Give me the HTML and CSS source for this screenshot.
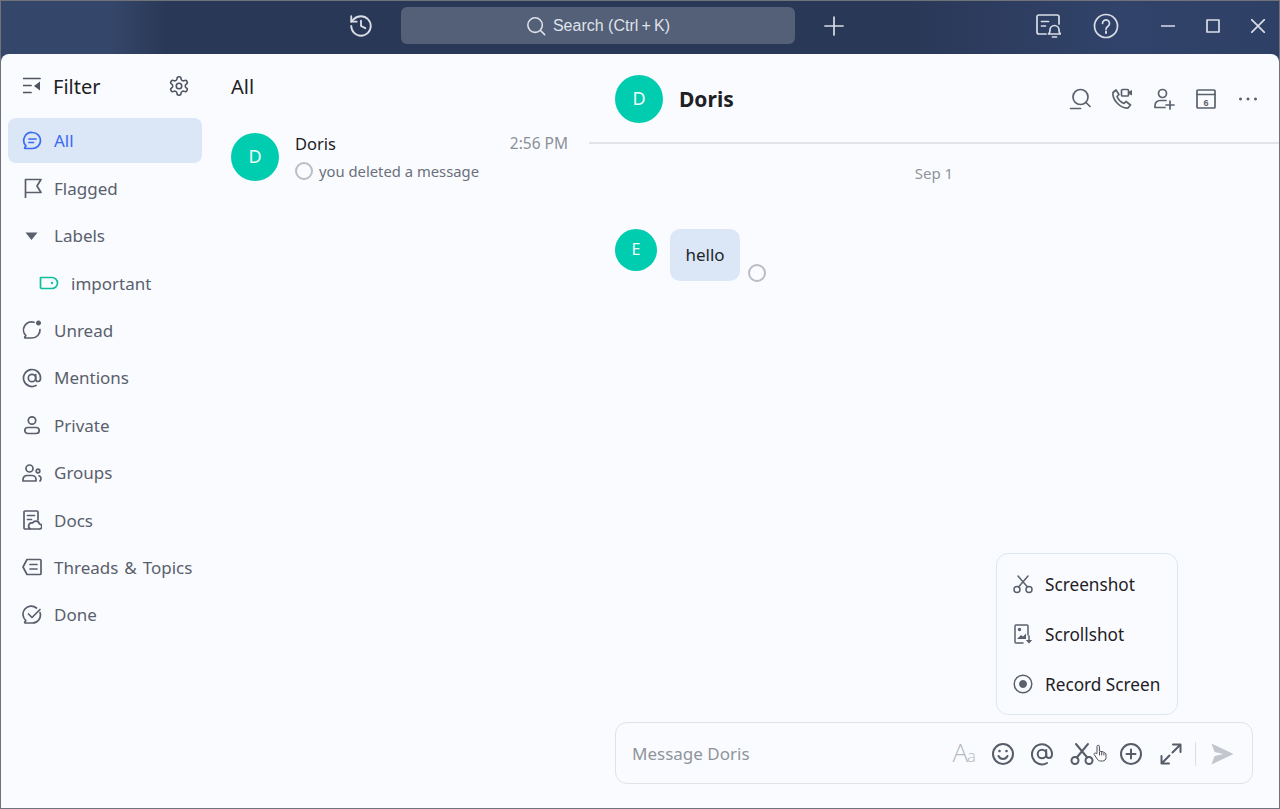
FILE: index.html
```html
<!DOCTYPE html>
<html lang="en">
<head>
    <meta charset="UTF-8">
    <meta name="viewport" content="width=device-width, initial-scale=1.0">
    <title>Doris</title>
    <link rel="stylesheet" href="styles.css">
</head>
<body>
<div class="app">
    <header class="titlebar">
        <svg class="tb-history" width="26" height="26" viewBox="0 0 24 24"><path d="M3 12a9 9 0 1 0 9-9 9.75 9.75 0 0 0-6.74 2.74L3 8"/><path d="M3 3v5h5"/><path d="M12 7v5l4 2"/></svg>
        <div class="search">
            <svg width="22" height="22" viewBox="0 0 22 22"><circle cx="10" cy="10" r="8"/><path d="M16 16l4.5 4.5"/></svg>
            <span>Search (Ctrl&#8201;+&#8201;K)</span>
        </div>
        <svg class="tb-plus" width="20" height="20" viewBox="0 0 20 20"><path d="M10 1v18M1 10h18"/></svg>
        <svg class="tb-bell" width="26" height="26" viewBox="0 0 26 26"><path d="M11 21H4a2 2 0 0 1-2-2V4a2 2 0 0 1 2-2h18a2 2 0 0 1 2 2v7"/><path d="M6.500 8.500h7M6.500 13h4"/><path d="M13.500 21c1.500-1 1.500-2.500 1.500-4a4.500 4.500 0 0 1 9 0c0 1.500 0 3 1.500 4z"/><path d="M17.500 24h4"/></svg>
        <svg class="tb-help" width="26" height="26" viewBox="0 0 26 26"><circle cx="13" cy="13" r="11.500"/><path d="M9.500 10.500a3.500 3.500 0 1 1 5.500 2.800c-1.300.9-2 1.500-2 3"/><path class="dot" d="M13 18.500v1.500"/></svg>
        <svg class="tb-min" width="14" height="14" viewBox="0 0 14 14"><path d="M0 7h14"/></svg>
        <svg class="tb-max" width="14" height="14" viewBox="0 0 14 14"><rect x="1" y="1" width="12" height="12"/></svg>
        <svg class="tb-close" width="14" height="14" viewBox="0 0 14 14"><path d="M0 0l14 14M14 0L0 14"/></svg>
    </header>

    <main class="main">
        <aside class="sidebar">
            <div class="side-head">
                <svg width="18" height="18" viewBox="0 0 18 18"><path d="M0 1.500h17M0 8.500h8M0 15.500h8"/><path class="solid" d="M17 4.500v9l-6-4.500z"/></svg>
                <span class="side-title">Filter</span>
                <svg class="gear" width="22" height="22" viewBox="0 0 24 24"><path d="M12.220 2h-.44a2 2 0 0 0-2 2v.18a2 2 0 0 1-1 1.730l-.43.25a2 2 0 0 1-2 0l-.15-.08a2 2 0 0 0-2.730.73l-.22.38a2 2 0 0 0 .73 2.730l.15.1a2 2 0 0 1 1 1.720v.51a2 2 0 0 1-1 1.740l-.15.09a2 2 0 0 0-.73 2.730l.22.38a2 2 0 0 0 2.730.73l.15-.08a2 2 0 0 1 2 0l.43.25a2 2 0 0 1 1 1.730V20a2 2 0 0 0 2 2h.44a2 2 0 0 0 2-2v-.18a2 2 0 0 1 1-1.730l.43-.25a2 2 0 0 1 2 0l.15.08a2 2 0 0 0 2.730-.73l.22-.39a2 2 0 0 0-.73-2.730l-.15-.08a2 2 0 0 1-1-1.740v-.5a2 2 0 0 1 1-1.740l.15-.09a2 2 0 0 0 .73-2.730l-.22-.38a2 2 0 0 0-2.730-.73l-.15.08a2 2 0 0 1-2 0l-.43-.25a2 2 0 0 1-1-1.730V4a2 2 0 0 0-2-2z"/><circle cx="12" cy="12" r="3"/></svg>
            </div>
            <nav class="nav">
                <div class="nav-item active">
                    <svg width="20" height="20" viewBox="0 0 20 20"><path d="M10.500 1.500a8 8 0 1 1 0 16H3.500c-.8 0-1-.6-.6-1.100l1.100-1.400a8 8 0 0 1 6.500-13.500z"/><path d="M7 8h7M7 11.500h4.500"/></svg>
                    <span>All</span>
                </div>
                <div class="nav-item">
                    <svg width="20" height="20" viewBox="0 0 20 20"><path d="M3.500 20V1.500h15.500l-4 6.500 4 6.500H3.500"/></svg>
                    <span>Flagged</span>
                </div>
                <div class="nav-item">
                    <svg width="20" height="20" viewBox="0 0 20 20"><path class="solid" d="M3.500 6.500h12l-6 7.500z"/></svg>
                    <span>Labels</span>
                </div>
                <div class="nav-item sub">
                    <svg class="teal" width="20" height="20" viewBox="0 0 20 20"><path d="M1.500 4.500h11.500a5.500 5.500 0 0 1 0 11H3a1.500 1.500 0 0 1-1.500-1.500z"/><path class="solid" d="M13 8.800a1.200 1.200 0 1 0 .01 0z"/></svg>
                    <span>important</span>
                </div>
                <div class="nav-item">
                    <svg width="20" height="20" viewBox="0 0 20 20"><path d="M18 9.500a8 8 0 0 1-8 8.500H3.500c-.8 0-1-.6-.6-1.100l1-1.300A8 8 0 0 1 12 2.300"/><path class="solid" d="M16.500 0.500a2.500 2.500 0 1 0 .01 0z"/></svg>
                    <span>Unread</span>
                </div>
                <div class="nav-item">
                    <svg width="20" height="20" viewBox="0 0 20 20"><path d="M14 17.500a8.500 8.500 0 1 1 4.500-7.500c0 2-1 3.500-2.500 3.500s-2.300-1-2.300-2.500V6.500"/><circle cx="10" cy="10" r="3.700"/></svg>
                    <span>Mentions</span>
                </div>
                <div class="nav-item">
                    <svg width="20" height="20" viewBox="0 0 20 20"><circle cx="10" cy="5.500" r="3.700"/><rect x="2.800" y="12.500" width="14.400" height="6" rx="3"/></svg>
                    <span>Private</span>
                </div>
                <div class="nav-item">
                    <svg width="20" height="20" viewBox="0 0 20 20"><circle cx="7.500" cy="5.500" r="3.500"/><path d="M1 18v-1.500a4 4 0 0 1 4-4h5a4 4 0 0 1 4 4V18z"/><circle cx="16" cy="8" r="1.800"/><path d="M17 12.800a3 3 0 0 1 2 2.700c0 1-.4 2-1 2.500"/></svg>
                    <span>Groups</span>
                </div>
                <div class="nav-item">
                    <svg width="20" height="20" viewBox="0 0 20 20"><path d="M8 19H3a1 1 0 0 1-1-1V2a1 1 0 0 1 1-1h12a1 1 0 0 1 1 1v8"/><path d="M5.500 5.500h7M5.500 9.500h4"/><path d="M9 19h8a2.500 2.500 0 0 0 .5-5 3.800 3.800 0 0 0-7-1 3 3 0 0 0-1.500 6z"/></svg>
                    <span>Docs</span>
                </div>
                <div class="nav-item">
                    <svg width="20" height="20" viewBox="0 0 20 20"><path d="M5 2.500h13a1 1 0 0 1 1 1v13a1 1 0 0 1-1 1H5L1 10z"/><path d="M8 7.500h7M8 12h7"/></svg>
                    <span>Threads &amp; Topics</span>
                </div>
                <div class="nav-item">
                    <svg width="20" height="20" viewBox="0 0 20 20"><path d="M18 7.500a8 8 0 0 1-7.500 10.500H3.500c-.8 0-1-.6-.6-1.100l1-1.300A8 8 0 0 1 14.500 3"/><path d="M6.500 9l3.500 3.500 8-8"/></svg>
                    <span>Done</span>
                </div>
            </nav>
        </aside>

        <section class="list">
            <h2 class="list-title">All</h2>
            <div class="conv">
                <div class="avatar large">D</div>
                <div class="conv-body">
                    <div class="conv-top">
                        <span class="conv-name">Doris</span>
                        <span class="conv-time">2:56 PM</span>
                    </div>
                    <div class="conv-sub">
                        <span class="read-mark"></span>
                        <span>you deleted a message</span>
                    </div>
                </div>
            </div>
        </section>

        <section class="chat">
            <div class="chat-head">
                <div class="avatar large">D</div>
                <span class="chat-name">Doris</span>
                <div class="chat-actions">
                    <svg width="22" height="22" viewBox="0 0 22 22"><circle cx="11.500" cy="9" r="7.500"/><path d="M17 14.500l4 4M1.500 20.500h10"/></svg>
                    <svg width="22" height="22" viewBox="0 0 22 22"><path d="M2 4.500l3-2.500 3 4.500-2 2c1 2.500 3.500 5.500 7 7l2-2 4.500 3.500-2.500 3C9.500 20.500 1 12 2 4.500z"/><rect x="10.500" y="1.500" width="7" height="6.500" rx="1"/><path class="solid" d="M18 3.500l3-1.500v5.500l-3-1.500z"/></svg>
                    <svg width="22" height="22" viewBox="0 0 22 22"><circle cx="9.500" cy="5.500" r="4"/><path d="M13 12.500H7a5 5 0 0 0-5 5v2h10M17 13v8M13 17h8"/></svg>
                    <svg width="22" height="22" viewBox="0 0 22 22"><rect x="2" y="2" width="18" height="18" rx="1"/><path d="M2 6.500h18"/><text class="cal-day" x="11" y="17.500">6</text></svg>
                    <svg width="22" height="22" viewBox="0 0 22 22"><path class="solid" d="M3.500 9.500a1.500 1.500 0 1 0 .01 0zM11 9.500a1.500 1.500 0 1 0 .01 0zM18.500 9.500a1.500 1.500 0 1 0 .01 0z"/></svg>
                </div>
            </div>
            <div class="messages">
                <div class="date">Sep 1</div>
                <div class="msg">
                    <div class="avatar small">E</div>
                    <div class="bubble">hello</div>
                    <span class="read-mark"></span>
                </div>
            </div>
            <div class="composer">
                <span class="placeholder">Message Doris</span>
                <div class="tools">
                    <span class="font-btn">A<small>a</small></span>
                    <svg width="24" height="24" viewBox="0 0 24 24"><circle cx="12" cy="12" r="10"/><path d="M7.500 14c1 2 2.700 3 4.500 3s3.500-1 4.500-3"/><path class="solid" d="M8.500 7.700a1.300 1.300 0 1 0 .01 0zM15.500 7.700a1.300 1.300 0 1 0 .01 0z"/></svg>
                    <svg class="at-btn" width="24" height="24" viewBox="0 0 24 24"><path d="M17 21a10 10 0 1 1 5-9c0 2.500-1.200 4-3 4s-2.800-1.200-2.800-3V8"/><circle cx="12" cy="12" r="4.300"/></svg>
                    <svg class="scissors" width="24" height="24" viewBox="0 0 24 24"><circle cx="5" cy="18.500" r="3.500"/><circle cx="19" cy="18.500" r="3.500"/><path d="M6.800 15.500L18 2M17.200 15.500L6 2"/></svg>
                    <svg class="plus-btn" width="24" height="24" viewBox="0 0 24 24"><circle cx="12" cy="12" r="10"/><path d="M12 7.500v9M7.500 12h9"/></svg>
                    <svg width="24" height="24" viewBox="0 0 24 24"><path d="M14 2.500h7.500V10M21 3l-7.500 7.500M10 21.500H2.500V14M3 21l7.500-7.500"/></svg>
                    <span class="tool-sep"></span>
                    <svg class="send" width="24" height="24" viewBox="0 0 24 24"><path class="solid" d="M1.500 1.500L23.500 12 1.500 22.500l3-8.500 9-2-9-2z"/></svg>
                </div>
            </div>

            <div class="shot-menu">
                <div class="shot-item">
                    <svg width="20" height="20" viewBox="0 0 20 20"><circle cx="4" cy="15.500" r="3"/><circle cx="16" cy="15.500" r="3"/><path d="M5.500 13L15 2M14.500 13L5 2"/></svg>
                    <span>Screenshot</span>
                </div>
                <div class="shot-item">
                    <svg width="20" height="20" viewBox="0 0 20 20"><path d="M10 19H3a1 1 0 0 1-1-1V2a1 1 0 0 1 1-1h11a1 1 0 0 1 1 1v9"/><circle cx="6.500" cy="5.500" r="1"/><path class="solid" d="M4 15l4-4 2 1.500 3-3V15z"/><path d="M16 12v6"/><path class="solid" d="M12.800 16h6.400L16 19.500z"/></svg>
                    <span>Scrollshot</span>
                </div>
                <div class="shot-item">
                    <svg width="20" height="20" viewBox="0 0 20 20"><circle cx="10" cy="10" r="8.800"/><path class="solid" d="M10 6a4 4 0 1 0 .01 0z"/></svg>
                    <span>Record Screen</span>
                </div>
            </div>

            <svg class="hand" width="14" height="18" viewBox="0 0 14 18"><path d="M4 9V2.500a1.200 1.200 0 0 1 2.400 0V7l4 1c1.500.5 2.600 1.200 2.600 3v2.500c0 2-1.500 3.500-3.500 3.500H7.500c-1.500 0-2.500-.7-3.300-2L1.200 10.500c-.6-1 .8-2.200 1.800-1.200z"/><path d="M6.500 8v3M8.700 8.500V11M10.900 9v2"/></svg>
        </section>
    </main>
</div>
</body>
</html>
```

FILE: styles.css
```css
* {
    box-sizing: border-box;
}
body, html {
    margin: 0;
    padding: 0;
    height: 100%;
    overflow: hidden;
    font-family: "Noto Sans", "Open Sans", sans-serif;
}
svg {
    display: block;
    flex: none;
    fill: none;
    stroke: currentColor;
    stroke-width: 1.700;
    stroke-linecap: round;
    stroke-linejoin: round;
}
svg .solid {
    fill: currentColor;
    stroke: none;
}
.app {
    display: flex;
    flex-direction: column;
    height: 809px;
    border: 1px solid #6f7278;
    background: linear-gradient(90deg, #34466a 0, #34466a 110px, #2a3857 165px, #2a3857 900px, #31436a 1120px, #2f4066 1280px);
}

/* title bar */
.titlebar {
    display: flex;
    align-items: center;
    height: 53px;
    flex: none;
    padding-bottom: 4px;
    color: #d9dde6;
}
.tb-history {
    margin-left: 347px;
}
.search {
    display: flex;
    align-items: center;
    justify-content: center;
    gap: 7px;
    width: 394px;
    height: 37px;
    margin-left: 27px;
    border-radius: 6px;
    background-color: #545f78;
    font-family: "Liberation Sans", Arial, sans-serif;
    font-size: 16px;
    color: #dfe3ea;
}
.search svg {
    width: 20px;
    height: 20px;
}
.tb-plus {
    margin-left: 29px;
}
.tb-bell {
    margin-left: 191px;
}
.tb-help {
    margin-left: 32px;
}
.tb-min {
    margin-left: 42px;
}
.tb-max {
    margin-left: 31px;
}
.tb-close {
    margin-left: 31px;
}
.tb-help .dot {
    stroke-width: 2;
}

/* main panel */
.main {
    display: flex;
    flex: 1;
    min-height: 0;
    background-color: #fafbfe;
    border-radius: 8px 8px 0 0;
}

/* left filter column */
.sidebar {
    width: 208px;
    flex: none;
    padding: 0 7px;
}
.side-head {
    display: flex;
    align-items: center;
    height: 64px;
    padding: 0 12px 0 15px;
    color: #4d5460;
}
.side-title {
    margin-left: 12px;
    font-size: 20px;
    color: #1d2024;
}
.gear {
    margin-left: auto;
}
.nav {
    display: flex;
    flex-direction: column;
    gap: 2px;
}
.nav-item {
    display: flex;
    align-items: center;
    gap: 12px;
    height: 45.400px;
    padding-left: 14px;
    padding-top: 0.400px;
    border-radius: 8px;
    font-size: 17px;
    word-spacing: 1.500px;
    color: #595f6c;
}
.nav-item.sub {
    padding-left: 31px;
}
.nav-item.active {
    background-color: #dbe6f7;
    color: #3a6bf4;
}
.teal {
    color: #0cbf9f;
}

/* conversation list */
.list {
    width: 380px;
    flex: none;
    padding-left: 22px;
    padding-right: 21px;
}
.list-title {
    margin: 0;
    height: 64px;
    line-height: 66px;
    font-size: 20px;
    font-weight: 400;
    color: #1d2024;
}
.conv {
    display: flex;
    gap: 16px;
    margin-top: 15px;
}
.conv-body {
    flex: 1;
}
.conv-top {
    display: flex;
    justify-content: space-between;
    height: 27px;
    line-height: 21px;
}
.conv-name {
    font-size: 16.500px;
    color: #1d2024;
}
.conv-time {
    font-size: 15.500px;
    color: #8b9097;
}
.conv-sub {
    display: flex;
    align-items: center;
    gap: 6px;
    font-size: 14.800px;
    line-height: 22px;
    color: #6a707b;
}
.read-mark {
    width: 18px;
    height: 18px;
    flex: none;
    border: 2px solid #b9bcc4;
    border-radius: 50%;
}
.avatar {
    display: flex;
    align-items: center;
    justify-content: center;
    flex: none;
    padding-bottom: 2px;
    border-radius: 50%;
    background-color: #00ccaf;
    color: #eefcf9;
}
.avatar.large {
    width: 48px;
    height: 48px;
    font-size: 18px;
}
.avatar.small {
    width: 42px;
    height: 42px;
    font-size: 16px;
}

/* chat pane */
.chat {
    position: relative;
    display: flex;
    flex-direction: column;
    flex: 1;
    min-width: 0;
}
.chat-head {
    display: flex;
    align-items: center;
    height: 90px;
    flex: none;
    padding: 2px 20px 0 26px;
    border-bottom: 2px solid #e1e3e8;
}
.chat-name {
    margin-left: 16px;
    font-size: 21px;
    font-weight: 700;
    color: #1d2024;
}
.chat-actions {
    display: flex;
    gap: 20px;
    margin-left: auto;
    color: #5a616c;
}
.cal-day {
    font-family: "Liberation Sans", sans-serif;
    font-size: 9px;
    font-weight: 700;
    fill: currentColor;
    stroke: none;
    text-anchor: middle;
}
.messages {
    flex: 1;
    padding: 0 26px;
}
.date {
    margin-top: 17px;
    height: 24px;
    line-height: 24px;
    text-align: center;
    font-size: 15px;
    color: #8f949c;
}
.msg {
    display: flex;
    align-items: flex-start;
    margin-top: 44px;
}
.bubble {
    width: 70px;
    height: 52px;
    margin-left: 13px;
    line-height: 52px;
    text-align: center;
    border-radius: 10px;
    background-color: #dbe6f7;
    font-size: 17px;
    color: #23262b;
}
.msg .read-mark {
    margin-left: 8px;
    margin-top: 35px;
}
.composer {
    display: flex;
    align-items: center;
    height: 62px;
    flex: none;
    margin: 0 26px 24px;
    padding: 1px 18px 0 16px;
    border: 1px solid #e0e2e6;
    border-radius: 12px;
}
.placeholder {
    font-size: 17px;
    color: #8f949c;
}
.tools {
    display: flex;
    align-items: center;
    gap: 15.500px;
    margin-left: auto;
    color: #565d68;
}
.tools svg {
    stroke-width: 2;
}
.font-btn {
    width: 24px;
    margin-right: -1px;
    font-family: "Open Sans", sans-serif;
    font-weight: 300;
    font-size: 26px;
    line-height: 24px;
    letter-spacing: -1px;
    color: #b4b8bf;
}
.font-btn small {
    font-size: 16px;
}
.at-btn {
    margin: 0 1px 0 -1px;
}
.scissors {
    margin-right: 9px;
}
.plus-btn {
    margin-right: 1px;
}
.tool-sep {
    width: 1px;
    height: 24px;
    margin-left: -4px;
    background-color: #dcdee2;
}
.send {
    margin-left: -1px;
    color: #c3c6cc;
}

/* screenshot popup */
.shot-menu {
    position: absolute;
    left: 407px;
    top: 499px;
    display: flex;
    flex-direction: column;
    justify-content: center;
    width: 182px;
    height: 162px;
    padding-left: 16px;
    border: 1px solid #dce7f6;
    border-radius: 12px;
    background-color: #fafbfe;
}
.shot-item {
    display: flex;
    align-items: center;
    gap: 12px;
    height: 50px;
    font-size: 17.200px;
    color: #1d2024;
}
.shot-item svg {
    color: #5a616c;
    stroke-width: 1.500;
}
.hand {
    position: absolute;
    left: 504px;
    top: 690px;
    color: #4b5058;
    stroke-width: 1;
    fill: #fff;
}
```
